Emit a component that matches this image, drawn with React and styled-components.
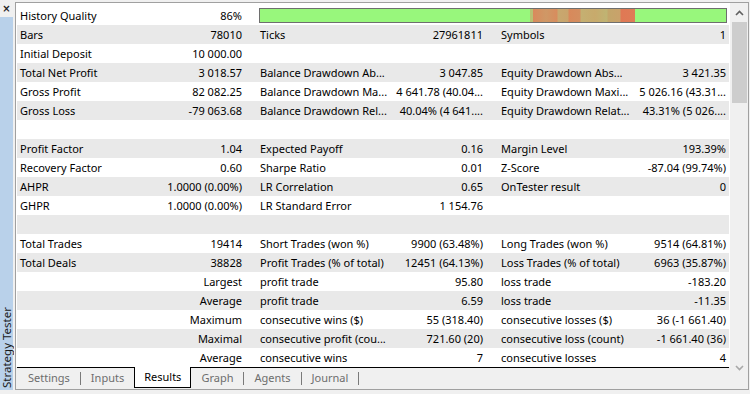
import React from "react";
import styled, { createGlobalStyle } from "styled-components";

const GlobalStyle = createGlobalStyle`
  html, body {
    margin: 0;
    padding: 0;
    background: #f0f0f0;
  }
  body {
    font-family: "Noto Sans", "Liberation Sans", sans-serif;
    font-size: 11px;
    color: #000;
  }
`;

const Window = styled.div`
  width: 750px;
  height: 394px;
  display: flex;
  background: #f0f0f0;
  overflow: hidden;
`;

const Sidebar = styled.div`
  width: 15px;
  flex-shrink: 0;
  display: flex;
  flex-direction: column;
`;

const CloseBox = styled.div`
  height: 17px;
  display: flex;
  align-items: center;
  justify-content: center;
  padding-right: 2px;
  font-family: "DejaVu Sans", sans-serif;
  font-size: 10px;
  font-weight: bold;
  color: #222;
`;

const SideStrip = styled.div`
  flex: 1;
  margin: 0 2px 4px 0;
  padding-bottom: 2px;
  background: #b9d1ea;
  display: flex;
  align-items: flex-end;
  justify-content: center;
`;

const SideLabel = styled.span`
  writing-mode: vertical-rl;
  transform: rotate(180deg);
  white-space: nowrap;
  line-height: 13px;
  font-size: 11.5px;
  color: #1a1a1a;
`;

const Main = styled.div`
  flex: 1;
  margin: 2px 1px 4px 0;
  border: 1px solid #a0a0a0;
  display: flex;
`;

const LeftCol = styled.div`
  width: 714px;
  display: flex;
  flex-direction: column;
`;

const Content = styled.div`
  height: 364px;
  padding: 3px 1px 0 1px;
  box-sizing: border-box;
  background: #fff;
`;

const Row = styled.div`
  display: grid;
  grid-template-columns: 143px 97px 136px 105px 138px 93px;
  height: 19px;
  line-height: 19px;
  background: ${(p) => (p.$alt ? "#e9e9e9" : "#fff")};
`;

const Label = styled.div`
  padding-left: 3px;
  white-space: nowrap;
  overflow: hidden;
`;

const Value = styled.div`
  text-align: right;
  padding-right: ${(p) => p.$pad}px;
  white-space: nowrap;
  overflow: hidden;
`;

const QualityCell = styled.div`
  grid-column: 3 / 7;
  padding: 2px;
`;

const QualityBar = styled.div`
  height: 13px;
  border: 1px solid #6e6e6e;
  background: linear-gradient(
    to right,
    #98f77c 0px,
    #98f77c 270px,
    #b7c273 270px,
    #b7c273 273px,
    #d98a5c 273px,
    #cf9866 286px,
    #d88c5d 297px,
    #c8a86f 298px,
    #c9a46c 308px,
    #d8895b 309px,
    #d48e5f 320px,
    #c4b072 321px,
    #c8aa6c 335px,
    #bfb473 347px,
    #c3a66a 348px,
    #c9a26b 360px,
    #e07854 361px,
    #de7c56 375px,
    #98f77c 375px,
    #98f77c 100%
  );
`;

const TabBar = styled.div`
  height: 21px;
  margin-left: 1px;
  width: 712px;
  border-top: 1px solid #000;
  display: flex;
  align-items: flex-start;
  padding-left: 1px;
  box-sizing: border-box;
`;

const Tab = styled.div`
  height: 19px;
  line-height: 19px;
  padding: 0 10px;
  color: #6d6d6d;
  white-space: nowrap;
`;

const ActiveTab = styled.div`
  margin-top: -1px;
  height: 19px;
  padding: 1px 9px 0;
  line-height: 18px;
  background: #fff;
  border: 1px solid #000;
  border-top: 0;
  color: #000;
`;

const Sep = styled.div`
  width: 1px;
  height: 13px;
  margin-top: 4px;
  background: #7a7a7a;
`;

const ScrollBar = styled.div`
  width: 18px;
  height: 374px;
  display: flex;
  flex-direction: column;
  align-items: center;
  background: #f0f0f0;
`;

const ScrollBtn = styled.div`
  height: 19px;
  width: 100%;
  display: flex;
  align-items: center;
  justify-content: center;
`;

const Thumb = styled.div`
  width: 15px;
  height: 81px;
  background: #cdcdcd;
`;

const Track = styled.div`
  flex: 1;
`;

const Arrow = ({ up, color }) => (
  <svg width="9" height="6" viewBox="0 0 9 6">
    <path
      d={up ? "M1 5 L4.5 1.5 L8 5" : "M1 1 L4.5 4.5 L8 1"}
      fill="none"
      stroke={color}
      strokeWidth="1.6"
    />
  </svg>
);

const rows = [
  null,
  ["Bars", "78010", "Ticks", "27961811", "Symbols", "1"],
  ["Initial Deposit", "10 000.00", "", "", "", ""],
  ["Total Net Profit", "3 018.57", "Balance Drawdown Ab...", "3 047.85", "Equity Drawdown Abs...", "3 421.35"],
  ["Gross Profit", "82 082.25", "Balance Drawdown Ma...", "4 641.78 (40.04...", "Equity Drawdown Maxi...", "5 026.16 (43.31..."],
  ["Gross Loss", "-79 063.68", "Balance Drawdown Rel...", "40.04% (4 641....", "Equity Drawdown Relat...", "43.31% (5 026...."],
  ["", "", "", "", "", ""],
  ["Profit Factor", "1.04", "Expected Payoff", "0.16", "Margin Level", "193.39%"],
  ["Recovery Factor", "0.60", "Sharpe Ratio", "0.01", "Z-Score", "-87.04 (99.74%)"],
  ["AHPR", "1.0000 (0.00%)", "LR Correlation", "0.65", "OnTester result", "0"],
  ["GHPR", "1.0000 (0.00%)", "LR Standard Error", "1 154.76", "", ""],
  ["", "", "", "", "", ""],
  ["Total Trades", "19414", "Short Trades (won %)", "9900 (63.48%)", "Long Trades (won %)", "9514 (64.81%)"],
  ["Total Deals", "38828", "Profit Trades (% of total)", "12451 (64.13%)", "Loss Trades (% of total)", "6963 (35.87%)"],
  ["", "Largest", "profit trade", "95.80", "loss trade", "-183.20"],
  ["", "Average", "profit trade", "6.59", "loss trade", "-11.35"],
  ["", "Maximum", "consecutive wins ($)", "55 (318.40)", "consecutive losses ($)", "36 (-1 661.40)"],
  ["", "Maximal", "consecutive profit (cou...", "721.60 (20)", "consecutive loss (count)", "-1 661.40 (36)"],
  ["", "Average", "consecutive wins", "7", "consecutive losses", "4"],
];

const tabs = ["Settings", "Inputs", "Results", "Graph", "Agents", "Journal"];

function App() {
  return (
    <>
      <GlobalStyle />
      <Window>
        <Sidebar>
          <CloseBox>×</CloseBox>
          <SideStrip>
            <SideLabel>Strategy Tester</SideLabel>
          </SideStrip>
        </Sidebar>
        <Main>
          <LeftCol>
            <Content>
              {rows.map((r, i) =>
                r === null ? (
                  <Row key={i}>
                    <Label>History Quality</Label>
                    <Value $pad={15}>86%</Value>
                    <QualityCell>
                      <QualityBar />
                    </QualityCell>
                  </Row>
                ) : (
                  <Row key={i} $alt={i % 2 === 1}>
                    <Label>{r[0]}</Label>
                    <Value $pad={15}>{r[1]}</Value>
                    <Label>{r[2]}</Label>
                    <Value $pad={15}>{r[3]}</Value>
                    <Label>{r[4]}</Label>
                    <Value $pad={3}>{r[5]}</Value>
                  </Row>
                )
              )}
            </Content>
            <TabBar>
              {tabs.map((t, i) => {
                const active = t === "Results";
                const nextActive = tabs[i + 1] === "Results";
                return (
                  <React.Fragment key={t}>
                    {active ? <ActiveTab>{t}</ActiveTab> : <Tab>{t}</Tab>}
                    {!active && !nextActive && <Sep />}
                  </React.Fragment>
                );
              })}
            </TabBar>
          </LeftCol>
          <ScrollBar>
            <ScrollBtn>
              <Arrow up color="#606060" />
            </ScrollBtn>
            <Thumb />
            <Track />
            <ScrollBtn>
              <Arrow color="#a8a8a8" />
            </ScrollBtn>
          </ScrollBar>
        </Main>
      </Window>
    </>
  );
}

export default App;
